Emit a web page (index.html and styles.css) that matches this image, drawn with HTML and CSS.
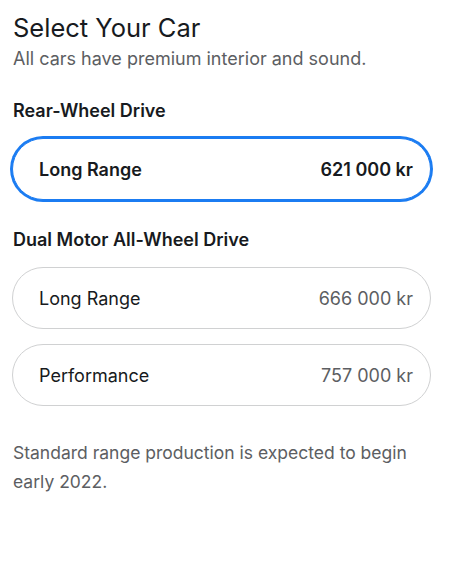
FILE: index.html
```html
<!DOCTYPE html>
<html lang="en">
<head>
    <meta charset="UTF-8">
    <meta name="viewport" content="width=device-width, initial-scale=1.0">
    <title>Select Your Car</title>
    <link rel="stylesheet" href="styles.css">
</head>
<body>
    <h1 class="title">Select Your Car</h1>
    <p class="subtitle">All cars have premium interior and sound.</p>

    <!-- Rear-Wheel Drive -->
    <h2 class="group-title">Rear-Wheel Drive</h2>
    <div class="options">
        <button class="option selected">
            <span class="name">Long Range</span>
            <span class="price">621 000 kr</span>
        </button>
    </div>

    <!-- Dual Motor -->
    <h2 class="group-title">Dual Motor All-Wheel Drive</h2>
    <div class="options">
        <button class="option">
            <span class="name">Long Range</span>
            <span class="price">666 000 kr</span>
        </button>
        <button class="option">
            <span class="name">Performance</span>
            <span class="price">757 000 kr</span>
        </button>
    </div>

    <p class="note">Standard range production is expected to begin early 2022.</p>
</body>
</html>
```

FILE: styles.css
```css
/* Basic Styling */
body {
    margin: 0;
    padding: 8px 19px 8px 12px;
    font-family: Inter, "Noto Sans", sans-serif;
    color: #171a20;
    background-color: #fff;
}

.title {
    font-size: 25.5px;
    font-weight: 400;
    margin: 4px 0 0 1px;
    line-height: 32px;
}

.subtitle {
    font-size: 18px;
    color: #5c5e62;
    margin: 3px 0 0 1px;
    line-height: 24px;
}

.group-title {
    font-size: 18px;
    font-weight: 600;
    margin: 28px 0 0 1px;
    line-height: 24px;
}

.options {
    display: flex;
    flex-direction: column;
    gap: 15px;
    margin-top: 15px;
}

.option {
    display: flex;
    justify-content: space-between;
    align-items: center;
    height: 62px;
    padding: 0 17px 0 26px;
    border: 1px solid #d0d1d2;
    border-radius: 31px;
    background: #fff;
    font-family: inherit;
    font-size: 18px;
    color: #171a20;
    cursor: pointer;
}

.option .price {
    color: #5c5e62;
}

/* Selected option */
.option.selected {
    border-color: #1b7cf2;
    box-shadow: 0 0 0 2px #1b7cf2;
    font-weight: 600;
}

.option.selected .price {
    color: #171a20;
}

.note {
    font-size: 17.5px;
    line-height: 29px;
    color: #5c5e62;
    margin: 32px 0 0 1px;
}
```
